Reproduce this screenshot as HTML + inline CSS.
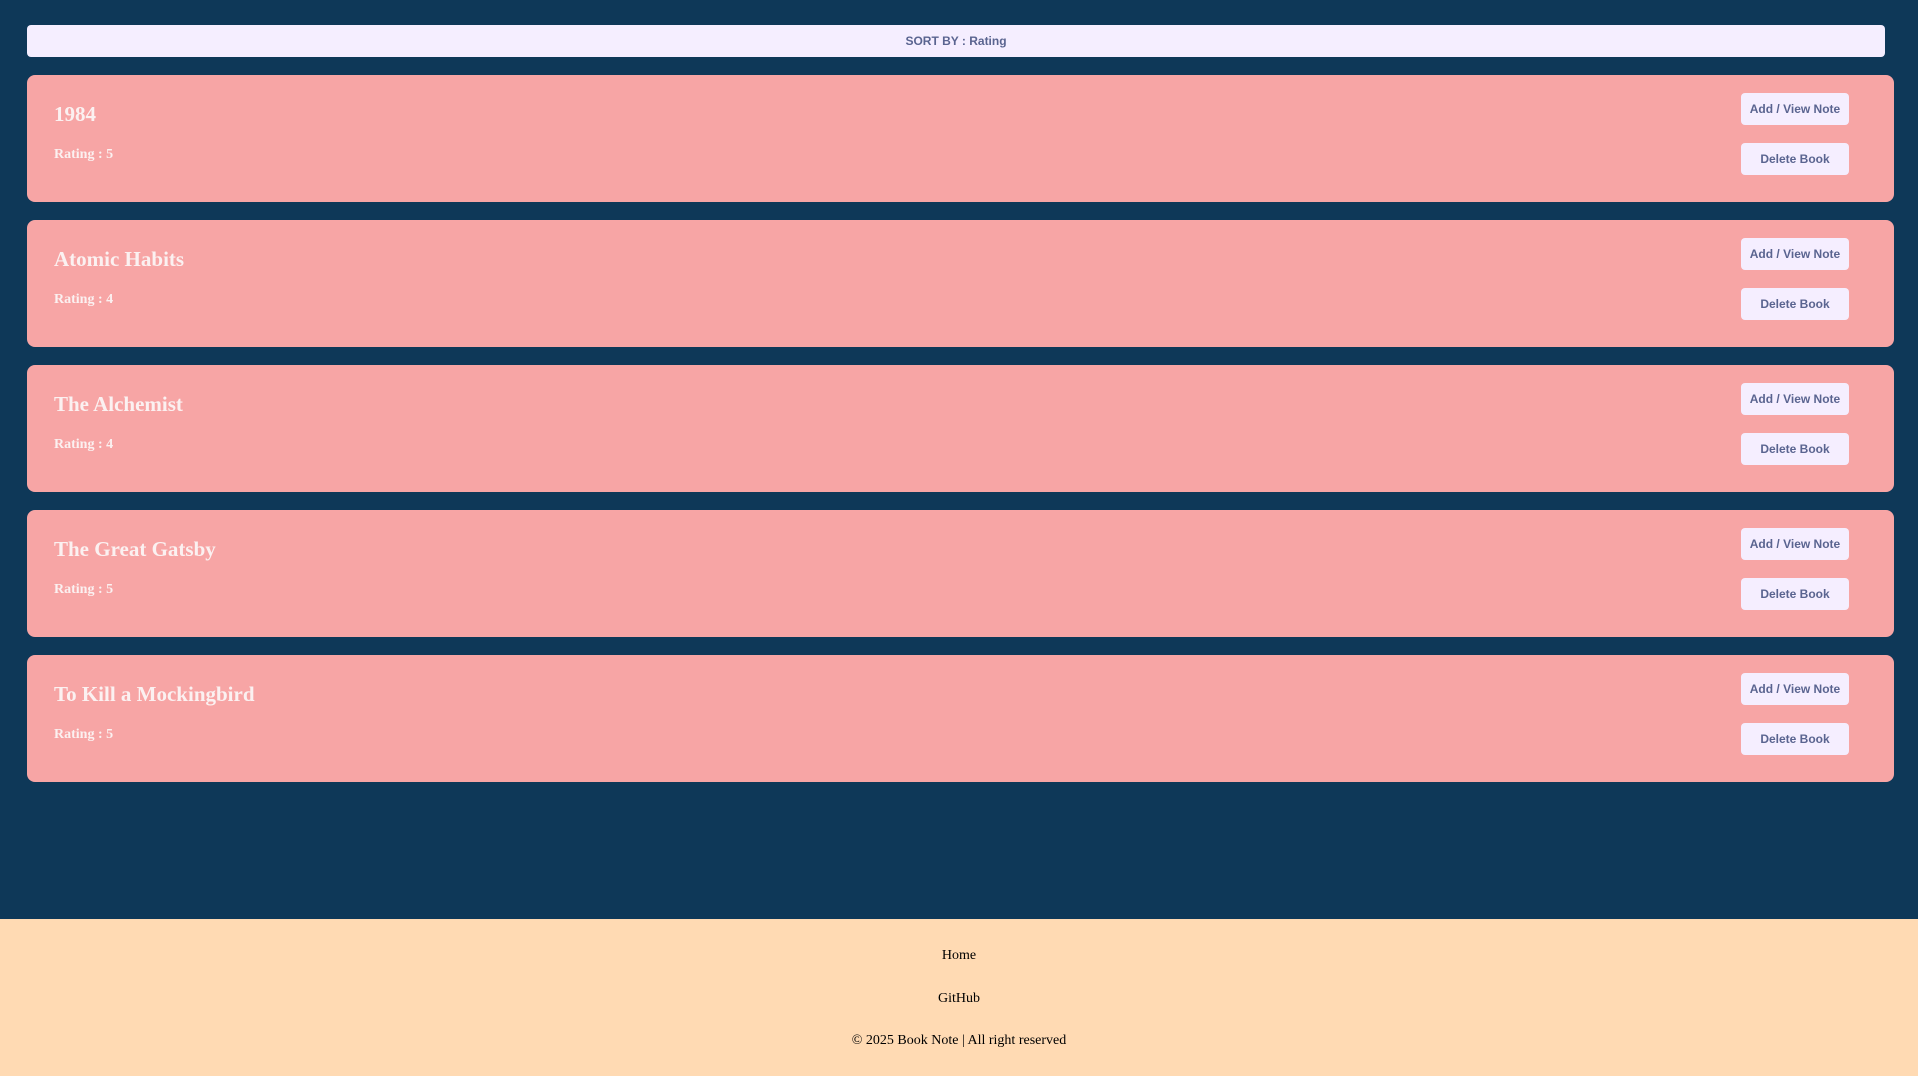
<!DOCTYPE html>
<html><head><style>
*{margin:0;padding:0;box-sizing:border-box}
body{width:1918px;height:1076px;background:#0e3858;position:relative;overflow:hidden;font-family:"Liberation Serif",serif}
.sort{position:absolute;left:27px;top:25px;width:1858px;height:32px;background:#f5eeff;border-radius:4px;text-align:center;font:bold 12px "Liberation Sans",sans-serif;color:#5a6490;line-height:32px}
.card{position:absolute;left:27px;width:1867px;height:127px;background:#f7a5a5;border-radius:8px}
.t{position:absolute;left:27px;top:26px;font-weight:bold;font-size:21px;color:#fbf1f1;line-height:26px}
.r{position:absolute;left:27px;top:72px;font-weight:bold;font-size:14px;color:#fbf1f1;line-height:16px}
.b{position:absolute;left:1714px;width:108px;height:32px;background:#f5eeff;border-radius:4px;text-align:center;font:bold 12px "Liberation Sans",sans-serif;color:#5a6490;line-height:32px}
.b1{top:18px}.b2{top:68px}
.foot{position:absolute;left:0;top:919px;width:1918px;height:157px;background:#ffdab3;text-align:center;font-size:14px;color:#000}
.foot div{position:absolute;width:100%;left:0}
</style></head><body>
<div class="sort">SORT BY : Rating</div>
<div class="card" style="top:75px"><div class="t">1984</div><div class="r">Rating : 5</div><div class="b b1">Add / View Note</div><div class="b b2">Delete Book</div></div>
<div class="card" style="top:220px"><div class="t">Atomic Habits</div><div class="r">Rating : 4</div><div class="b b1">Add / View Note</div><div class="b b2">Delete Book</div></div>
<div class="card" style="top:365px"><div class="t">The Alchemist</div><div class="r">Rating : 4</div><div class="b b1">Add / View Note</div><div class="b b2">Delete Book</div></div>
<div class="card" style="top:510px"><div class="t">The Great Gatsby</div><div class="r">Rating : 5</div><div class="b b1">Add / View Note</div><div class="b b2">Delete Book</div></div>
<div class="card" style="top:655px"><div class="t">To Kill a Mockingbird</div><div class="r">Rating : 5</div><div class="b b1">Add / View Note</div><div class="b b2">Delete Book</div></div>
<div class="foot">
<div style="top:29px">Home</div>
<div style="top:72px">GitHub</div>
<div style="top:114px">© 2025 Book Note | All right reserved</div>
</div>
</body></html>
